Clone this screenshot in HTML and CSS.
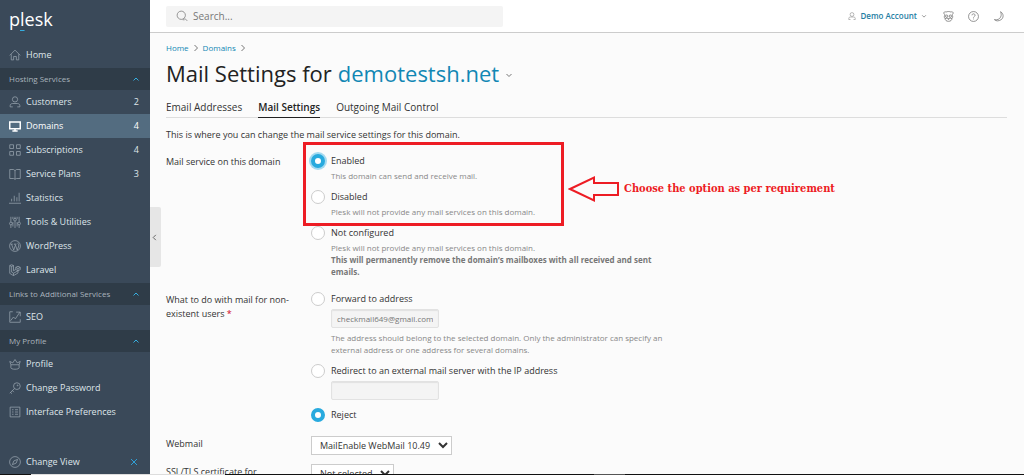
FILE: index.html
```html
<!DOCTYPE html>
<html lang="en">
<head>
    <meta charset="UTF-8">
    <meta name="viewport" content="width=device-width, initial-scale=1.0">
    <title>Mail Settings for demotestsh.net - Plesk</title>
    <link rel="stylesheet" href="styles.css">
</head>
<body>
    <div class="app">
        <aside class="sidebar">
            <a href="#" class="logo"><span>p<span class="logo-mark">l</span>esk</span></a>

            <nav class="nav">
                <a href="#" class="nav-item">
                    <svg class="icon" viewBox="0 0 16 16"><path d="M1 8.500 8 1.500l7 7M3 7v7.500h3.200V10h3.600v4.500H13V7"/></svg>
                    <span>Home</span>
                </a>

                <button type="button" class="nav-heading">Hosting Services
                    <svg class="chevron" viewBox="0 0 8 8"><path d="M1.500 5.500 4 3l2.500 2.500"/></svg>
                </button>
                <div class="nav-group">
                    <a href="#" class="nav-item">
                        <svg class="icon" viewBox="0 0 16 16"><circle cx="8" cy="4.500" r="3.500"/><path d="M5 14.500H1.500v-1.500c0-2 1.500-3 3.500-3h6c2 0 3.500 1 3.500 3v1.500H11"/></svg>
                        <span>Customers</span><span class="count">2</span>
                    </a>
                    <a href="#" class="nav-item active">
                        <svg class="icon" viewBox="0 0 16 16"><path d="M1 2.500h14v9H1z" stroke-width="2"/><path d="M4.500 14.500h7M8 12v2" stroke-width="2"/></svg>
                        <span>Domains</span><span class="count">4</span>
                    </a>
                    <a href="#" class="nav-item">
                        <svg class="icon" viewBox="0 0 16 16"><path d="M1 1h5v5H1zM10 1h5v5h-5zM1 10h5v5H1zM10 10h5v5h-5z"/></svg>
                        <span>Subscriptions</span><span class="count">4</span>
                    </a>
                    <a href="#" class="nav-item">
                        <svg class="icon" viewBox="0 0 16 16"><path d="M1 2h5l2 1.500L10 2h5v12h-5l-2 1-2-1H1zM8 3.500V15"/></svg>
                        <span>Service Plans</span><span class="count">3</span>
                    </a>
                    <a href="#" class="nav-item">
                        <svg class="icon" viewBox="0 0 16 16"><path d="M0 15h16M3.500 12.500V9M7 12.500V5M10.500 12.500V7M13.500 12.500V1"/></svg>
                        <span>Statistics</span>
                    </a>
                    <a href="#" class="nav-item">
                        <svg class="icon" viewBox="0 0 16 16"><path d="M2.500 1v7M2.500 12v4M8 1v2M8 7v9M13.500 1v7M13.500 12v4"/><circle cx="2.500" cy="10" r="1.800"/><circle cx="8" cy="5" r="1.800"/><circle cx="13.500" cy="10" r="1.800"/><path d="M5.200 1v3M5.200 8v6M10.800 1v3M10.800 8v6"/></svg>
                        <span>Tools &amp; Utilities</span>
                    </a>
                    <a href="#" class="nav-item">
                        <svg class="icon" viewBox="0 0 16 16"><circle cx="8" cy="8" r="7.200"/><path d="M2 5.500h3M3.300 5.500l3 8L8.500 7l-.7-1.500M6.500 5.500H10M8.500 6.500l2.500 7 2-5.500c.5-2-1.500-2.500-1-4.500"/></svg>
                        <span>WordPress</span>
                    </a>
                    <a href="#" class="nav-item">
                        <svg class="icon" viewBox="0 0 16 16"><path d="M1 2l2.500-1L6 2v7l3-1.700V4.500L12 3l3 1.500v3L12 9v3l-6 3.500L1 12.500zM1 2l2.500 1.300L6 2M3.500 3.300v7.500L6 12.300l6-3.300M9 4.500 12 6l3-1.500M12 6v3L9 7.300M6 12.300v3.200"/></svg>
                        <span>Laravel</span>
                    </a>
                </div>

                <button type="button" class="nav-heading">Links to Additional Services
                    <svg class="chevron" viewBox="0 0 8 8"><path d="M1.500 5.500 4 3l2.500 2.500"/></svg>
                </button>
                <div class="nav-group">
                    <a href="#" class="nav-item">
                        <svg class="icon" viewBox="0 0 16 16"><path d="M5 1H1v14h14v-4M2 13l4-5 2.500 2.500 6-9M9.500 1.500H15V7"/></svg>
                        <span>SEO</span>
                    </a>
                </div>

                <button type="button" class="nav-heading">My Profile
                    <svg class="chevron" viewBox="0 0 8 8"><path d="M1.500 5.500 4 3l2.500 2.500"/></svg>
                </button>
                <div class="nav-group">
                    <a href="#" class="nav-item">
                        <svg class="icon" viewBox="0 0 16 16"><path d="M2.500 9 1 4.500l4 2L8 2l3 4.500 4-2L13.500 9zM2.500 9v4c0 1 2 2 5.500 2s5.500-1 5.500-2V9"/></svg>
                        <span>Profile</span>
                    </a>
                    <a href="#" class="nav-item">
                        <svg class="icon" viewBox="0 0 16 16"><circle cx="10.500" cy="5.500" r="4.500"/><path d="M7.300 8.700 1 15M2 14l2 1.500M4.500 11.500l2 2"/><circle cx="11.500" cy="4.500" r=".6"/></svg>
                        <span>Change Password</span>
                    </a>
                    <a href="#" class="nav-item">
                        <svg class="icon" viewBox="0 0 16 16"><path d="M1.500 1.500h13v13h-13zM4 5h2M8 5h4M4 8h2M8 8h4M4 11h2M8 11h4"/></svg>
                        <span>Interface Preferences</span>
                    </a>
                </div>
            </nav>

            <div class="change-view">
                <a href="#" class="nav-item">
                    <svg class="icon" viewBox="0 0 16 16"><circle cx="8" cy="8" r="7.200"/><path d="M11.500 4.500 9.500 9.500l-5 2 2-5z"/></svg>
                    <span>Change View</span>
                </a>
                <button type="button" class="close" aria-label="Close">
                    <svg viewBox="0 0 8 8"><path d="M1 1l6 6M7 1 1 7"/></svg>
                </button>
            </div>
        </aside>

        <div class="page">
            <header class="topbar">
                <label class="search">
                    <svg viewBox="0 0 16 16"><circle cx="7" cy="7" r="5.500"/><path d="M9 13h2.500M11.500 11l3.500 3.500"/></svg>
                    <input type="search" placeholder="Search..." aria-label="Search">
                </label>
                <div class="topbar-tools">
                    <button type="button" class="account">
                        <svg class="tool-small" viewBox="0 0 16 16"><circle cx="8" cy="5" r="3.800"/><path d="M5 15H1.500v-2c0-2 1.500-3 3.500-3h6c2 0 3.500 1 3.500 3v2H11"/></svg>
                        Demo Account
                        <svg class="caret" viewBox="0 0 8 8"><path d="M1.500 3 4 5.500 6.500 3"/></svg>
                    </button>
                    <button type="button" class="tool" aria-label="Advisor">
                        <svg viewBox="0 0 16 16"><path d="M3 5.500C0 4 1 0 4.500 1.500c2-1 5-1 7 0C15 0 16 4 13 5.500M3 5.500c-1.500 2-1.500 4 0 5.500 0 2.500 2 4 5 4s5-1.500 5-4c1.500-1.500 1.500-3.500 0-5.500M3 11l3.500-1M13 11l-3.500-1M6.500 11h3L8 12.500z"/><circle cx="5.300" cy="7.500" r="1.700"/><circle cx="10.700" cy="7.500" r="1.700"/></svg>
                    </button>
                    <button type="button" class="tool" aria-label="Help">
                        <svg viewBox="0 0 16 16"><circle cx="8" cy="8" r="7.200"/><path d="M5.800 6.300c0-3 4.500-2.800 4.500 0C10.300 8 8 8 8 9.700M8 11v1.200"/></svg>
                    </button>
                    <button type="button" class="tool" aria-label="Dark mode">
                        <svg viewBox="0 0 16 16"><path d="M11 1c5 3 4.500 9 1 11.500S4 15 2 12.500c4 1 7.500-.5 9-3.500s1-5.500 0-8z"/></svg>
                    </button>
                </div>
            </header>

            <main class="content">
                <nav class="breadcrumbs" aria-label="Breadcrumbs">
                    <a href="#">Home</a>
                    <svg viewBox="0 0 8 8"><path d="M2.500 1 5.500 4l-3 3"/></svg>
                    <a href="#">Domains</a>
                    <svg viewBox="0 0 8 8"><path d="M2.500 1 5.500 4l-3 3"/></svg>
                </nav>

                <h1>Mail Settings for <a href="#">demotestsh.net</a>
                    <svg class="caret" viewBox="0 0 8 8"><path d="M1.500 3 4 5.500 6.500 3"/></svg>
                </h1>

                <nav class="tabs" aria-label="Mail">
                    <a href="#">Email Addresses</a>
                    <a href="#" class="current">Mail Settings</a>
                    <a href="#">Outgoing Mail Control</a>
                </nav>

                <p class="intro">This is where you can change the mail service settings for this domain.</p>

                <form class="form">
                    <div class="row row-group" role="radiogroup" aria-labelledby="service-label">
                        <div class="row-label" id="service-label">Mail service on this domain</div>
                        <div class="options">
                            <div class="option">
                                <input type="radio" name="service" id="enabled" class="focused" checked>
                                <label for="enabled">Enabled</label>
                                <p class="hint">This domain can send and receive mail.</p>
                            </div>
                            <div class="option">
                                <input type="radio" name="service" id="disabled">
                                <label for="disabled">Disabled</label>
                                <p class="hint">Plesk will not provide any mail services on this domain.</p>
                            </div>
                            <div class="option">
                                <input type="radio" name="service" id="not-configured">
                                <label for="not-configured">Not configured</label>
                                <p class="hint">Plesk will not provide any mail services on this domain.<br><b>This will permanently remove the domain’s mailboxes with all received and sent emails.</b></p>
                            </div>

                            <div class="callout">
                                <div class="callout-box"></div>
                                <svg class="callout-arrow" viewBox="0 0 52 28"><path d="M2 14 26 2.500V8h24v12H26v5.500z"/></svg>
                                <span class="callout-text">Choose the option as per requirement</span>
                            </div>
                        </div>
                    </div>

                    <div class="row row-group" role="radiogroup" aria-labelledby="users-label">
                        <div class="row-label" id="users-label">What to do with mail for non-existent users <span class="required">*</span></div>
                        <div class="options">
                            <div class="option">
                                <input type="radio" name="users" id="forward">
                                <label for="forward">Forward to address</label>
                                <input type="text" class="field" aria-label="Forwarding address" value="checkmail649@gmail.com" disabled>
                                <p class="hint">The address should belong to the selected domain. Only the administrator can specify an external address or one address for several domains.</p>
                            </div>
                            <div class="option">
                                <input type="radio" name="users" id="redirect">
                                <label for="redirect">Redirect to an external mail server with the IP address</label>
                                <input type="text" class="field" aria-label="IP address" disabled>
                            </div>
                            <div class="option">
                                <input type="radio" name="users" id="reject" checked>
                                <label for="reject">Reject</label>
                            </div>
                        </div>
                    </div>

                    <div class="row">
                        <label class="row-label" for="webmail">Webmail</label>
                        <div><select id="webmail"><option>MailEnable WebMail 10.49</option></select></div>
                    </div>

                    <div class="row">
                        <label class="row-label" for="certificate">SSL/TLS certificate for</label>
                        <div><select id="certificate"><option>Not selected</option></select></div>
                    </div>
                </form>
            </main>

            <button type="button" class="collapse" aria-label="Collapse sidebar">
                <svg viewBox="0 0 8 8"><path d="M5.500 1 2.500 4l3 3"/></svg>
            </button>
        </div>
    </div>
    <div class="edge"></div>
</body>
</html>
```
FILE: styles.css
```css
* {
    margin: 0;
    padding: 0;
    box-sizing: border-box;
}

body {
    font-family: "Open Sans", "Noto Sans", sans-serif;
    font-size: 9px;
    line-height: 14px;
    color: #333;
    background: #fbfbfb;
}

a {
    color: #1187b4;
    text-decoration: none;
}

button, input, select {
    font: inherit;
    color: inherit;
}

button {
    background: none;
    border: none;
    cursor: pointer;
}

svg {
    display: block;
    flex: none;
    fill: none;
    stroke: currentColor;
}

.app {
    display: flex;
    height: 100vh;
    overflow: hidden;
}

/* Sidebar */
.sidebar {
    display: flex;
    flex-direction: column;
    flex: none;
    width: 150px;
    background: #3a4959;
    color: #dfe5ea;
}

.logo {
    padding: 7px 9px 12px;
    font-size: 18px;
    line-height: 24px;
    color: #fff;
}

.logo-mark {
    text-decoration: underline 1px #35aee0;
    text-decoration-skip-ink: none;
    text-underline-offset: 4px;
}

.nav-group {
    padding-bottom: 1px;
}

.nav > .nav-item {
    margin-bottom: 1px;
}

.nav-item {
    display: flex;
    align-items: center;
    gap: 5px;
    height: 24px;
    padding: 0 11px 0 9px;
    color: #dfe5ea;
}

.nav-item.active {
    background: #536c80;
    color: #fff;
}

.icon {
    width: 12px;
    height: 12px;
    color: #98a4af;
}

.active .icon {
    color: #fff;
}

.count {
    margin-left: auto;
}

.nav-heading {
    display: flex;
    align-items: center;
    justify-content: space-between;
    width: 100%;
    height: 22px;
    padding: 0 10px 0 9px;
    background: #2f3c48;
    color: #aab4bd;
    font-size: 8px;
}

.chevron {
    width: 8px;
    height: 8px;
    color: #35aee0;
}

.change-view {
    display: flex;
    align-items: center;
    justify-content: space-between;
    margin-top: auto;
    padding: 0 12px 1px 0;
}

.close {
    color: #2f9fd6;
}

.close svg {
    width: 8px;
    height: 8px;
}

/* Top bar */
.page {
    position: relative;
    display: flex;
    flex-direction: column;
    flex: 1;
    min-width: 0;
}

.topbar {
    display: flex;
    flex: none;
    align-items: center;
    justify-content: space-between;
    height: 33px;
    padding: 0 20px 0 16px;
    background: #fff;
    border-bottom: 1px solid #ccc;
}

.search {
    display: flex;
    align-items: center;
    gap: 5px;
    width: 337px;
    height: 21px;
    padding: 0 10px;
    background: #f4f4f4;
    border-radius: 2px;
    font-size: 10px;
    color: #777;
}

.search svg {
    width: 12px;
    height: 12px;
}

.search input {
    flex: 1;
    min-width: 0;
    background: none;
    border: none;
    outline: none;
}

.search input::placeholder {
    color: #777;
}

.topbar-tools {
    display: flex;
    align-items: center;
    gap: 14px;
    color: #666;
}

.account {
    display: flex;
    align-items: center;
    gap: 4px;
    margin-right: 2px;
    font-size: 8px;
    font-weight: 600;
    color: #1f7ea3;
}

.account svg {
    color: #777;
}

.tool-small {
    width: 8px;
    height: 8px;
}

.tool svg {
    width: 11px;
    height: 11px;
}

.caret {
    width: 6px;
    height: 6px;
    color: #777;
}

/* Content */
.content {
    flex: 1;
    min-height: 0;
    padding: 8px 17px 0 16px;
    overflow: hidden;
}

.breadcrumbs {
    display: flex;
    align-items: center;
    gap: 3px;
    font-size: 8px;
}

.breadcrumbs svg {
    width: 8px;
    height: 8px;
    color: #777;
}

h1 {
    display: flex;
    align-items: center;
    gap: 6px;
    margin: 3px 0 10px;
    font-size: 22px;
    font-weight: 400;
    line-height: 30px;
    color: #222;
}

h1 .caret {
    width: 8px;
    height: 8px;
    margin-top: 4px;
}

.tabs {
    display: flex;
    gap: 16px;
    margin-bottom: 10px;
    border-bottom: 1px solid #ddd;
    font-size: 10px;
}

.tabs a {
    padding: 2px 0 3px;
    margin-bottom: -1px;
    color: #333;
}

.tabs .current {
    border-bottom: 1px solid #222;
    font-weight: 600;
    color: #222;
}

.intro {
    margin-bottom: 12px;
}

.row {
    display: grid;
    grid-template-columns: 133px minmax(0, 357px);
    column-gap: 12px;
    margin-bottom: 9px;
}

.row-group {
    margin-bottom: 14px;
}

.row-label {
    padding-top: 1px;
}

.required {
    color: #d0021b;
}

.options {
    position: relative;
    display: grid;
    gap: 8px;
}

.option {
    display: grid;
    grid-template-columns: 14px minmax(0, 1fr);
    column-gap: 6px;
}

.option > :nth-child(n+3) {
    grid-column: 2;
}

input[type="radio"] {
    appearance: none;
    width: 14px;
    height: 14px;
    background: #fff;
    border: 1px solid #ccc;
    border-radius: 50%;
}

input[type="radio"]:checked {
    border: 4px solid #28aade;
}

input[type="radio"].focused {
    box-shadow: 0 0 0 2px #a4daf0;
}

.hint {
    margin-top: 2px;
    font-size: 8px;
    line-height: 12px;
    color: #888;
}

.hint b {
    font-weight: 700;
    color: #777;
}

.field {
    width: 108px;
    height: 19px;
    margin-top: 3px;
    padding: 0 5px;
    background: #f4f4f4;
    border: 1px solid #e2e2e2;
    border-radius: 2px;
    box-shadow: inset 0 1px 1px #e2e2e2;
    font-size: 8px;
    color: #777;
}

.field + .hint {
    margin-top: 4px;
}

select {
    height: 19px;
    padding: 0 4px;
    background: #fff;
    border: 1px solid #ccc;
}

/* Red note drawn over the first two options */
.callout {
    position: absolute;
    top: -12px;
    left: -8px;
    display: flex;
    align-items: center;
    gap: 4px;
    color: #ed1c24;
    pointer-events: none;
}

.callout-box {
    width: 261px;
    height: 84px;
    border: 3px solid #ed1c24;
}

.callout-arrow {
    width: 52px;
    height: 28px;
    margin-top: 10px;
    stroke-width: 2;
}

.callout-text {
    margin-top: 10px;
    font-family: "DejaVu Serif Condensed", "DejaVu Serif", serif;
    font-size: 11px;
    font-weight: 700;
    white-space: nowrap;
}

.collapse {
    position: absolute;
    top: 207px;
    left: 0;
    width: 11px;
    height: 60px;
    padding-left: 1px;
    background: #e6e6e6;
    border-radius: 0 2px 2px 0;
    color: #555;
}

.collapse svg {
    width: 7px;
    height: 7px;
}

/* Thin strip along the bottom of the window */
.edge {
    position: fixed;
    right: 0;
    bottom: 0;
    left: 0;
    height: 1px;
    background: linear-gradient(90deg, #111 3%, #ddd 3% 22%, #111 22% 58%, #555 58% 61%, #111 61%);
}
```
